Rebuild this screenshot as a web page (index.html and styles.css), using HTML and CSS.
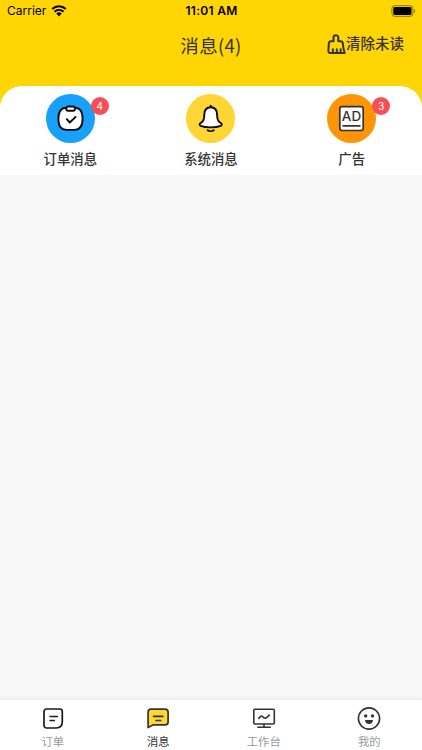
FILE: index.html
```
<!DOCTYPE html>
<html lang="zh-CN">
<head>
  <meta charset="utf-8">
  <title>消息</title>
  <link rel="stylesheet" href="styles.css">
</head>
<body>
  <div class="app">
    <header class="header">
      <div class="status">
        <div class="carrier">
          <span>Carrier</span>
          <svg width="16" height="12" viewBox="0 0 16 12">
            <path d="M1.200 4a9.700 9.700 0 0 1 13.600 0M3.500 6.700a6.400 6.400 0 0 1 9 0" fill="none" stroke="#000" stroke-width="1.900"/>
            <path d="M5.300 8.600a3.900 3.900 0 0 1 5.400 0L8 11.400z"/>
          </svg>
        </div>
        <div class="time">11:01 AM</div>
        <div class="battery">
          <svg width="25" height="12" viewBox="0 0 25 12">
            <rect x=".9" y=".7" width="21" height="10.600" rx="2.800" fill="none" stroke="#8b7600" stroke-width="1"/>
            <rect x="2.300" y="2.100" width="18.200" height="7.800" rx="1.300"/>
            <path d="M23 4.100c1.600.6 1.600 3.200 0 3.800z" fill="#8b7600"/>
          </svg>
        </div>
      </div>
      <div class="nav">
        <h1 class="title">消息(4)</h1>
        <div class="clear">
          <svg width="19" height="21" viewBox="0 0 19 21" fill="none" stroke="#333" stroke-width="2" stroke-linecap="round" stroke-linejoin="round">
            <path d="M6.500 7.200V3.600a2.400 2.400 0 0 1 4.800 0v3.600h2.200c1.500 0 2.200.8 2.300 2.200.2 3.300.7 6.300 1.900 9.600H3.400c-1.400 0-2.100-.8-2-2.200l.4-7.200c.1-1.600.8-2.400 2.300-2.400z"/>
            <path d="M5.900 18.600v-3.300M9.800 18.600v-3.300M13.600 18.600v-3.300"/>
          </svg>
          <span>清除未读</span>
        </div>
      </div>
    </header>

    <section class="types">
      <div class="type">
        <div class="circle blue">
          <svg width="27" height="27" viewBox="0 0 27 27" fill="none" stroke="#0b0b0b" stroke-width="1.900" stroke-linecap="round" stroke-linejoin="round">
            <path d="M9.500 2.600h8c5.700 0 8.100 4.400 8.100 11 0 7.800-2.600 11.300-8.100 11.300h-8c-5.500 0-8.100-3.500-8.100-11.300 0-6.600 2.400-11 8.100-11z" fill="#fff"/>
            <rect x="9.300" y="1.500" width="8.600" height="4.200" rx="1.800" fill="#fff"/>
            <path d="M9.800 14.200l3 3.300 5.800-5.600"/>
          </svg>
          <i class="badge">4</i>
        </div>
        <span>订单消息</span>
      </div>
      <div class="type">
        <div class="circle yellow">
          <svg width="27" height="29" viewBox="0 0 27 29" fill="none" stroke="#0b0b0b" stroke-width="1.900" stroke-linecap="round" stroke-linejoin="round">
            <path d="M13.700 1.700v1.600"/>
            <path d="M13.700 3.300c-4.400 0-6.400 3.200-6.400 7.600 0 4.700-.7 6.500-3.700 8.200-1.300.8-1.400 2.200 0 2.800 5.200 2 15 2 20.200 0 1.400-.6 1.300-2 0-2.800-3-1.700-3.700-3.500-3.700-8.200 0-4.400-2-7.600-6.400-7.600z" fill="#fff"/>
            <path d="M10.600 26.200c1.600 1.200 4.600 1.200 6.200 0"/>
          </svg>
        </div>
        <span>系统消息</span>
      </div>
      <div class="type">
        <div class="circle orange">
          <svg width="27" height="27" viewBox="0 0 27 27">
            <rect x="1.800" y="1.700" width="23.400" height="23.800" rx="2.200" fill="#fff" stroke="#333" stroke-width="1.700"/>
            <text x="13.500" y="16.200" class="ad">AD</text>
            <path d="M5.200 20.900h16.600" stroke="#333" stroke-width="1.800" stroke-linecap="round"/>
          </svg>
          <i class="badge">3</i>
        </div>
        <span>广告</span>
      </div>
    </section>

    <main class="list"></main>

    <footer class="tabs">
      <div class="tab">
        <svg width="24" height="24" viewBox="0 0 24 24" fill="none" stroke="#1a1a1a" stroke-width="1.700" stroke-linecap="round" stroke-linejoin="round">
          <path d="M5.500 3h13.300a2.500 2.500 0 0 1 2.500 2.500v10.300c0 3.800-2.400 6.200-6.200 6.200H5.500A2.500 2.500 0 0 1 3 19.500v-14A2.500 2.500 0 0 1 5.500 3z"/>
          <path d="M9.200 10.500h7M9.200 14.500h4"/>
        </svg>
        <span>订单</span>
      </div>
      <div class="tab active">
        <svg width="24" height="24" viewBox="0 0 24 24" fill="none" stroke="#333" stroke-width="1.700" stroke-linecap="round" stroke-linejoin="round">
          <path d="M5 3.200h14c2.100 0 3.100 1 3.100 2.900v9.800c0 2-1 3-3.100 3H7l-4.900 2.600V6.100c0-1.900 1-2.900 2.900-2.900z" fill="#fdd835"/>
          <path d="M7.600 10.400h9.200M10 14.500h4.600"/>
        </svg>
        <span>消息</span>
      </div>
      <div class="tab">
        <svg width="24" height="24" viewBox="0 0 24 24" fill="none" stroke="#333" stroke-width="1.600" stroke-linecap="round" stroke-linejoin="round">
          <rect x="1.800" y="3.200" width="20.500" height="14.800" rx="1"/>
          <path d="M12 18v3M5.800 21.300h12.500"/>
          <path d="M6.800 12.500c1.900-3.100 3.200-2.900 4.600-1.200s2.700 1.200 5.800-2.200"/>
        </svg>
        <span>工作台</span>
      </div>
      <div class="tab">
        <svg width="24" height="24" viewBox="0 0 24 24">
          <circle cx="12" cy="12.500" r="10.600" fill="none" stroke="#333" stroke-width="1.600"/>
          <circle cx="8.700" cy="9.900" r="1.700" fill="#333"/>
          <circle cx="15.500" cy="9.900" r="1.700" fill="#333"/>
          <path d="M8 14h8c0 5.300-8 5.300-8 0z" fill="#333"/>
        </svg>
        <span>我的</span>
      </div>
    </footer>
  </div>
</body>
</html>
```
FILE: styles.css
```
* {
  box-sizing: border-box;
}

body {
  margin: 0;
  font-family: Inter, "Noto Sans CJK SC", sans-serif;
  color: #333;
}

.app {
  height: 750px;
  display: flex;
  flex-direction: column;
  overflow: hidden;
  background: #f8f8f8;
}

svg {
  display: block;
  flex: none;
}

.header {
  height: 108px;
  flex: none;
  background: #ffd504;
}

.status {
  height: 22px;
  padding: 0 6px 0 7px;
  display: grid;
  grid-template-columns: 1fr auto 1fr;
  align-items: center;
  font-size: 12px;
  line-height: 22px;
  color: #000;
}

.carrier {
  display: flex;
  align-items: center;
  gap: 5px;
}

.time {
  font-weight: 600;
  letter-spacing: 0.3px;
}

.battery {
  justify-self: end;
}

.nav {
  height: 44px;
  padding: 0 18px;
  display: grid;
  grid-template-columns: 1fr auto 1fr;
  align-items: center;
}

.title {
  grid-column: 2;
  margin: 2px 0 0;
  font-family: "Noto Sans CJK SC", sans-serif;
  font-size: 18.500px;
  line-height: 24px;
  font-weight: 400;
  letter-spacing: 0.3px;
}

.clear {
  justify-self: end;
  display: flex;
  align-items: center;
  font-size: 14.500px;
  line-height: 20px;
  font-weight: 500;
  white-space: nowrap;
}

/* white sheet slides over the yellow header */
.types {
  height: 89px;
  margin-top: -22px;
  padding-top: 8px;
  flex: none;
  display: grid;
  grid-template-columns: repeat(3, 1fr);
  background: #fff;
  border-radius: 22px 22px 0 0;
}

.type {
  display: flex;
  flex-direction: column;
  align-items: center;
  gap: 6px;
  font-size: 13.400px;
  line-height: 20px;
  font-weight: 500;
}

.circle {
  position: relative;
  width: 49px;
  height: 49px;
  border-radius: 50%;
  display: flex;
  align-items: center;
  justify-content: center;
}

.blue {
  background: #18a0fb;
}

.yellow {
  background: #fdd535;
}

.orange {
  background: #ff9407;
}

.ad {
  font: 500 13.500px Inter, sans-serif;
  text-anchor: middle;
  fill: #333;
}

.badge {
  position: absolute;
  top: 3px;
  right: -14px;
  width: 18px;
  height: 18px;
  border-radius: 50%;
  background: #f84f55;
  color: #fff;
  font-size: 10px;
  line-height: 18px;
  font-style: normal;
  font-weight: 400;
  text-align: center;
}

.list {
  flex: 1;
}

.tabs {
  height: 50px;
  flex: none;
  display: flex;
  background: #fff;
  box-shadow: 0 -1px 5px rgba(0, 0, 0, 0.08);
}

.tab {
  flex: 1;
  padding-top: 6px;
  display: flex;
  flex-direction: column;
  align-items: center;
  gap: 4px;
  font-size: 11.300px;
  line-height: 16px;
  color: #999;
}

.active {
  color: #333;
}
```
